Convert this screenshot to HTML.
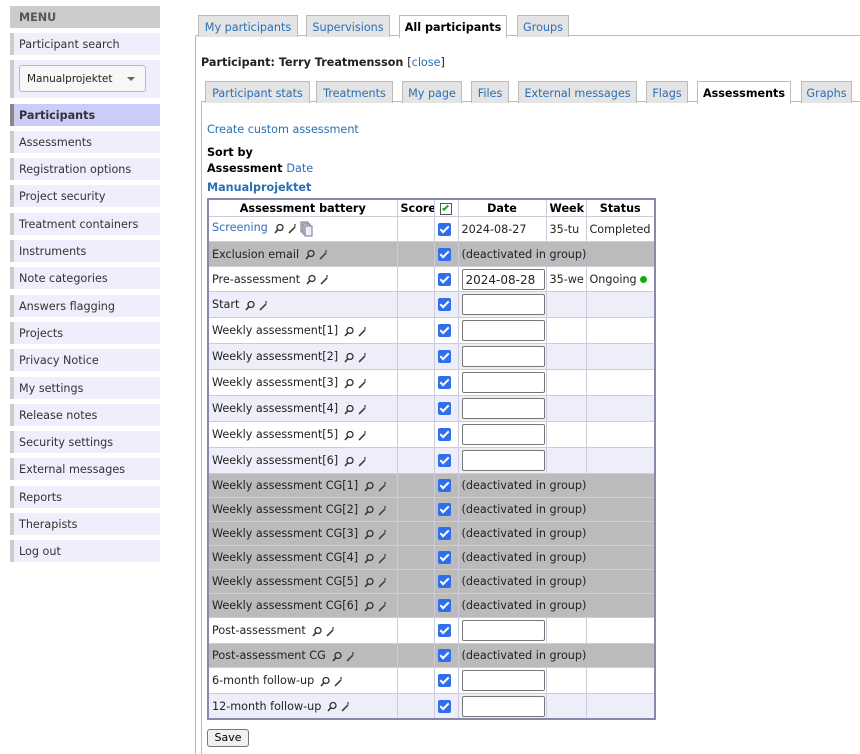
<!DOCTYPE html>
<html><head><meta charset="utf-8"><style>
*{box-sizing:border-box}
body{margin:0;width:860px;height:754px;overflow:hidden;background:#fff;font-family:"DejaVu Sans","Liberation Sans",sans-serif;font-size:11.2px;color:#222}
a{color:#2a6fb5;text-decoration:none}
.side{position:absolute;left:10px;top:6px;width:150px}
.mh{height:22px;background:#ccc;color:#555;font-weight:bold;padding:5px 9px}
.it{height:22px;background:#eeeefc;border-left:4px solid #ccc;padding:5px 5px;margin-top:5.3px;color:#333;white-space:nowrap}
.it.act{background:#ccccf8;border-left-color:#888;font-weight:bold}
.selb{height:38px;background:#eeeefc;border-left:4px solid #ccc;margin-top:5px;padding:5px 5px}
.sel{width:127px;height:27px;border:1px solid #bbb;border-radius:3px;background:#f7f7f7;font-size:10.5px;padding:7px 7px;position:relative}
.sel:after{content:"";position:absolute;right:10px;top:11px;border:4px solid transparent;border-top:4px solid #666}
.tab{position:absolute;height:22px;background:#e4e4e4;border:1px solid #bbb;border-bottom:none;padding:5px 0 0;text-align:center;color:#2a6fb5;white-space:nowrap}
.tab.on{background:#fff;color:#000;font-weight:bold;height:23px}
.line{position:absolute;background:#bbb}
table{position:absolute;left:207px;top:198px;border-collapse:collapse;border:2px solid #8888aa;width:449px;table-layout:fixed}
td,th{border:1px solid #ccccdd;padding:1px 3px 0;white-space:nowrap;overflow:hidden}
th{height:17px;font-weight:bold;color:#000}
tr.w td{background:#fff}tr.l td{background:#eeeefa}tr.g td{background:#bbb}
.cb{display:inline-block;width:13px;height:13px;background:#2f6fed;border-radius:2px;position:relative;vertical-align:middle}
.cb:after{content:"";position:absolute;left:4px;top:1px;width:3px;height:7px;border:solid #fff;border-width:0 2px 2px 0;transform:rotate(45deg)}
.inp{display:inline-block;width:83px;height:21px;border:1px solid #777;border-radius:2px;background:#fff;vertical-align:middle;padding:3px 3px;font-size:12px}
.ic{display:inline-block;vertical-align:middle;margin-left:6px}
</style></head><body>
<div class="side">
<div class="mh">MENU</div>
<div class="it">Participant search</div>
<div class="selb"><div class="sel">Manualprojektet</div></div>
<div class="it act">Participants</div>
<div class="it">Assessments</div>
<div class="it">Registration options</div>
<div class="it">Project security</div>
<div class="it">Treatment containers</div>
<div class="it">Instruments</div>
<div class="it">Note categories</div>
<div class="it">Answers flagging</div>
<div class="it">Projects</div>
<div class="it">Privacy Notice</div>
<div class="it">My settings</div>
<div class="it">Release notes</div>
<div class="it">Security settings</div>
<div class="it">External messages</div>
<div class="it">Reports</div>
<div class="it">Therapists</div>
<div class="it">Log out</div>
</div>

<div class="line" style="left:195px;top:35px;width:665px;height:1px"></div>
<div class="line" style="left:195px;top:35px;width:1px;height:719px"></div>
<div class="tab" style="left:198px;top:15px;width:100px">My participants</div>
<div class="tab" style="left:306px;top:15px;width:84px">Supervisions</div>
<div class="tab on" style="left:399px;top:15px;width:108px">All participants</div>
<div class="tab" style="left:517px;top:15px;width:52px">Groups</div>

<div style="position:absolute;left:201px;top:56px;font-weight:bold">Participant: Terry Treatmensson <span style="font-weight:normal">[<a>close</a>]</span></div>

<div class="line" style="left:201px;top:101px;width:659px;height:1px"></div>
<div class="line" style="left:201px;top:101px;width:1px;height:653px"></div>
<div class="tab" style="left:205px;top:81px;width:105px">Participant stats</div>
<div class="tab" style="left:316px;top:81px;width:77px">Treatments</div>
<div class="tab" style="left:402px;top:81px;width:60px">My page</div>
<div class="tab" style="left:471px;top:81px;width:38px">Files</div>
<div class="tab" style="left:518px;top:81px;width:119px">External messages</div>
<div class="tab" style="left:646px;top:81px;width:42px">Flags</div>
<div class="tab on" style="left:697px;top:81px;width:94px">Assessments</div>
<div class="tab" style="left:801px;top:81px;width:51px">Graphs</div>

<div style="position:absolute;left:207px;top:123px"><a>Create custom assessment</a></div>
<div style="position:absolute;left:207px;top:146px;font-weight:bold;color:#000">Sort by</div>
<div style="position:absolute;left:207px;top:162px;font-weight:bold;color:#000">Assessment <a style="font-weight:normal">Date</a></div>
<div style="position:absolute;left:207px;top:181px;font-weight:bold"><a>Manualprojektet</a></div>

<svg width="0" height="0" style="position:absolute"><defs>
<g id="ic"><circle cx="6" cy="4.5" r="3" fill="none" stroke="#333" stroke-width="1.3"/><path d="M4 6.5L1 10" stroke="#333" stroke-width="1.6"/><path d="M15 10L21 4" stroke="#444" stroke-width="1.6"/><path d="M21 1v3M20 2h2" stroke="#444" stroke-width="0.8"/></g>
</defs></svg>

<table>
<colgroup><col style="width:189px"><col style="width:37px"><col style="width:24px"><col style="width:88px"><col style="width:40px"><col></colgroup>
<tr class="w"><th>Assessment battery</th><th>Score</th><th><span style="display:inline-block;width:12px;height:12px;border:1px solid #555;position:relative;vertical-align:middle"><span style="position:absolute;left:3px;top:0;width:3px;height:7px;border:solid #2a2;border-width:0 2px 2px 0;transform:rotate(45deg)"></span></span></th><th>Date</th><th>Week</th><th>Status</th></tr>
<tr class="w" style="height:25px"><td><a>Screening</a><svg class="ic" width="24" height="11"><use href="#ic"/></svg><svg width="14" height="16" style="vertical-align:top;margin-left:2px"><rect x="1" y="1" width="7" height="10" fill="#ccd" stroke="#778"/><rect x="3" y="3" width="7" height="10" fill="#dde" stroke="#778"/><rect x="5" y="5" width="7" height="10" fill="#eef" stroke="#778"/></svg></td><td></td><td><span class="cb"></span></td><td>2024-08-27</td><td>35-tu</td><td>Completed</td></tr>
<tr class="g" style="height:25px"><td>Exclusion email<svg class="ic" width="24" height="11"><use href="#ic"/></svg></td><td></td><td><span class="cb"></span></td><td colspan="3">(deactivated in group)</td></tr>
<tr class="w" style="height:25px"><td>Pre-assessment<svg class="ic" width="24" height="11"><use href="#ic"/></svg></td><td></td><td><span class="cb"></span></td><td><span class="inp">2024-08-28</span></td><td>35-we</td><td>Ongoing <span style="display:inline-block;width:7px;height:7px;border-radius:50%;background:#1a1"></span></td></tr>
<tr class="l" style="height:26px"><td>Start<svg class="ic" width="24" height="11"><use href="#ic"/></svg></td><td></td><td><span class="cb"></span></td><td><span class="inp"></span></td><td></td><td></td></tr>
<tr class="w" style="height:26px"><td>Weekly assessment[1]<svg class="ic" width="24" height="11"><use href="#ic"/></svg></td><td></td><td><span class="cb"></span></td><td><span class="inp"></span></td><td></td><td></td></tr>
<tr class="l" style="height:26px"><td>Weekly assessment[2]<svg class="ic" width="24" height="11"><use href="#ic"/></svg></td><td></td><td><span class="cb"></span></td><td><span class="inp"></span></td><td></td><td></td></tr>
<tr class="w" style="height:26px"><td>Weekly assessment[3]<svg class="ic" width="24" height="11"><use href="#ic"/></svg></td><td></td><td><span class="cb"></span></td><td><span class="inp"></span></td><td></td><td></td></tr>
<tr class="l" style="height:26px"><td>Weekly assessment[4]<svg class="ic" width="24" height="11"><use href="#ic"/></svg></td><td></td><td><span class="cb"></span></td><td><span class="inp"></span></td><td></td><td></td></tr>
<tr class="w" style="height:26px"><td>Weekly assessment[5]<svg class="ic" width="24" height="11"><use href="#ic"/></svg></td><td></td><td><span class="cb"></span></td><td><span class="inp"></span></td><td></td><td></td></tr>
<tr class="l" style="height:26px"><td>Weekly assessment[6]<svg class="ic" width="24" height="11"><use href="#ic"/></svg></td><td></td><td><span class="cb"></span></td><td><span class="inp"></span></td><td></td><td></td></tr>
<tr class="g" style="height:24px"><td>Weekly assessment CG[1]<svg class="ic" width="24" height="11"><use href="#ic"/></svg></td><td></td><td><span class="cb"></span></td><td colspan="3">(deactivated in group)</td></tr>
<tr class="g" style="height:24px"><td>Weekly assessment CG[2]<svg class="ic" width="24" height="11"><use href="#ic"/></svg></td><td></td><td><span class="cb"></span></td><td colspan="3">(deactivated in group)</td></tr>
<tr class="g" style="height:24px"><td>Weekly assessment CG[3]<svg class="ic" width="24" height="11"><use href="#ic"/></svg></td><td></td><td><span class="cb"></span></td><td colspan="3">(deactivated in group)</td></tr>
<tr class="g" style="height:24px"><td>Weekly assessment CG[4]<svg class="ic" width="24" height="11"><use href="#ic"/></svg></td><td></td><td><span class="cb"></span></td><td colspan="3">(deactivated in group)</td></tr>
<tr class="g" style="height:24px"><td>Weekly assessment CG[5]<svg class="ic" width="24" height="11"><use href="#ic"/></svg></td><td></td><td><span class="cb"></span></td><td colspan="3">(deactivated in group)</td></tr>
<tr class="g" style="height:24px"><td>Weekly assessment CG[6]<svg class="ic" width="24" height="11"><use href="#ic"/></svg></td><td></td><td><span class="cb"></span></td><td colspan="3">(deactivated in group)</td></tr>
<tr class="w" style="height:26px"><td>Post-assessment<svg class="ic" width="24" height="11"><use href="#ic"/></svg></td><td></td><td><span class="cb"></span></td><td><span class="inp"></span></td><td></td><td></td></tr>
<tr class="g" style="height:24px"><td>Post-assessment CG<svg class="ic" width="24" height="11"><use href="#ic"/></svg></td><td></td><td><span class="cb"></span></td><td colspan="3">(deactivated in group)</td></tr>
<tr class="w" style="height:26px"><td>6-month follow-up<svg class="ic" width="24" height="11"><use href="#ic"/></svg></td><td></td><td><span class="cb"></span></td><td><span class="inp"></span></td><td></td><td></td></tr>
<tr class="l" style="height:26px"><td>12-month follow-up<svg class="ic" width="24" height="11"><use href="#ic"/></svg></td><td></td><td><span class="cb"></span></td><td><span class="inp"></span></td><td></td><td></td></tr>
</table>

<div style="position:absolute;left:207px;top:729px;width:42px;height:18px;border:1px solid #777;border-radius:3px;background:#f0f0f0;font-size:11px;text-align:center;line-height:16px;color:#000">Save</div>
</body></html>
